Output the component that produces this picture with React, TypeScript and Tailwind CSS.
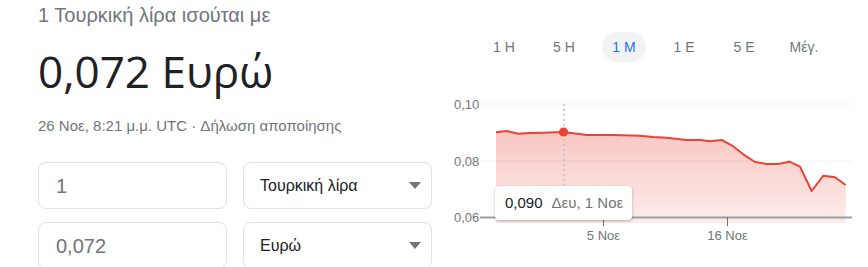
import React from "react";

const pts: [number, number][] = [
  [496, 132.3], [506.7, 131], [518.3, 133.7], [530, 133], [543.3, 132.7], [563.3, 132],
  [586.7, 135], [613.3, 135], [640, 135.7], [653.3, 137], [666.7, 137.7], [686.7, 140],
  [700, 140], [710, 141.3], [721.7, 140], [731.7, 145.3], [743.3, 154.3], [755, 162],
  [766.7, 164], [778.3, 164], [789.3, 161.7], [800, 166.7], [811.7, 191], [823.3, 175.7],
  [835, 177.3], [845.7, 185],
];

const OX = 440;
const OY = 90;

function Chart() {
  const p = pts.map(([x, y]) => [x - OX, y - OY]);
  const line = p.map(([x, y], i) => `${i ? "L" : "M"}${x.toFixed(1)} ${y.toFixed(1)}`).join(" ");
  const area = `${line} L${p[p.length - 1][0]} ${223 - OY} L${p[0][0]} ${223 - OY} Z`;
  return (
    <svg width={428} height={177} className="block" style={{ fontFamily: '"Liberation Sans", Arial, sans-serif' }}>
      <defs>
        <linearGradient id="g" x1="0" y1="0" x2="0" y2="1">
          <stop offset="0" stopColor="#ea4335" stopOpacity="0.3" />
          <stop offset="1" stopColor="#ea4335" stopOpacity="0.1" />
        </linearGradient>
      </defs>
      <line x1={480 - OX} x2={852 - OX} y1={104 - OY} y2={104 - OY} stroke="#f1f3f4" strokeWidth={1} />
      <line x1={480 - OX} x2={852 - OX} y1={161 - OY} y2={161 - OY} stroke="#f1f3f4" strokeWidth={1} />
      <path d={area} fill="url(#g)" />
      <line x1={564 - OX} x2={564 - OX} y1={104 - OY} y2={217 - OY} stroke="#bdc1c6" strokeWidth={1.5} strokeDasharray="2 3" />
      <path d={line} fill="none" stroke="#ea4335" strokeWidth={2} strokeLinejoin="round" />
      <circle cx={563.5 - OX} cy={132 - OY} r={4.5} fill="#ea4335" />
      <line x1={480 - OX} x2={852 - OX} y1={217.5 - OY} y2={217.5 - OY} stroke="#9aa0a6" strokeWidth={2} />
      <line x1={603.5 - OX} x2={603.5 - OX} y1={217 - OY} y2={226 - OY} stroke="#70757a" strokeWidth={1} />
      <line x1={727.5 - OX} x2={727.5 - OX} y1={217 - OY} y2={226 - OY} stroke="#70757a" strokeWidth={1} />
      <text x={454 - OX} y={109 - OY} fontSize={13} fill="#70757a">0,10</text>
      <text x={454 - OX} y={166 - OY} fontSize={13} fill="#70757a">0,08</text>
      <text x={454 - OX} y={222 - OY} fontSize={13} fill="#70757a">0,06</text>
      <text x={603.5 - OX} y={240 - OY} fontSize={13} fill="#70757a" textAnchor="middle">5 Νοε</text>
      <text x={727.5 - OX} y={240 - OY} fontSize={13} fill="#70757a" textAnchor="middle">16 Νοε</text>
    </svg>
  );
}

function Select({ label }: { label: string }) {
  return (
    <div className="flex h-[47px] w-[189px] items-center justify-between rounded-lg border border-[#dfe1e5] pl-[16px] pr-[10px] text-[16px] text-[#202124]">
      <span>{label}</span>
      <svg width="12" height="7" viewBox="0 0 12 7"><path d="M0 0h12L6 7z" fill="#757575" /></svg>
    </div>
  );
}

function Input({ value }: { value: string }) {
  return (
    <div className="flex h-[47px] w-[189px] items-center rounded-lg border border-[#dfe1e5] pl-[17px] text-[20px] text-[#70757a]">
      {value}
    </div>
  );
}

export default function App() {
  const tabs = ["1 Η", "5 Η", "1 Μ", "1 Ε", "5 Ε", "Μέγ."];
  return (
    <div className="relative flex h-[267px] w-[868px] overflow-hidden bg-white" style={{ fontFamily: '"Liberation Sans", Arial, sans-serif' }}>
      <div className="w-[440px] shrink-0 pl-[38px]">
        <div className="mt-[3px] text-[20px] leading-[24px] text-[#70757a]">1 Τουρκική λίρα ισούται με</div>
        <div className="mt-[18px] text-[44px] leading-[52px] text-[#202124]" style={{ fontFamily: '"Open Sans", sans-serif' }}>0,072 Ευρώ</div>
        <div className="mt-[20px] text-[15px] leading-[18px] text-[#70757a]">26 Νοε, 8:21 μ.μ. UTC · Δήλωση αποποίησης</div>
        <div className="mt-[27px] flex flex-col gap-[13px]">
          <div className="flex gap-[16px]">
            <Input value="1" />
            <Select label="Τουρκική λίρα" />
          </div>
          <div className="flex gap-[16px]">
            <Input value="0,072" />
            <Select label="Ευρώ" />
          </div>
        </div>
      </div>
      <div className="relative w-[428px] shrink-0">
        <div className="mt-[32px] flex pl-[34px]">
          {tabs.map((t) => (
            <div key={t} className="flex w-[60px] justify-center">
              <div
                className={
                  t === "1 Μ"
                    ? "flex h-[30px] w-[44px] items-center justify-center rounded-full bg-[#f1f3f4] text-[14px] text-[#1a73e8]"
                    : "flex h-[30px] w-[44px] items-center justify-center text-[14px] text-[#70757a]"
                }
              >
                {t}
              </div>
            </div>
          ))}
        </div>
        <div className="mt-[28px]">
          <Chart />
        </div>
        <div className="absolute left-[55px] top-[186px] flex h-[34px] items-center gap-[9px] whitespace-nowrap rounded bg-white pl-[10px] pr-[9px] text-[15px] shadow-[0_1px_3px_rgba(0,0,0,0.3)]">
          <span className="text-[#202124]">0,090</span>
          <span className="text-[#70757a]">Δευ, 1 Νοε</span>
        </div>
      </div>
    </div>
  );
}
